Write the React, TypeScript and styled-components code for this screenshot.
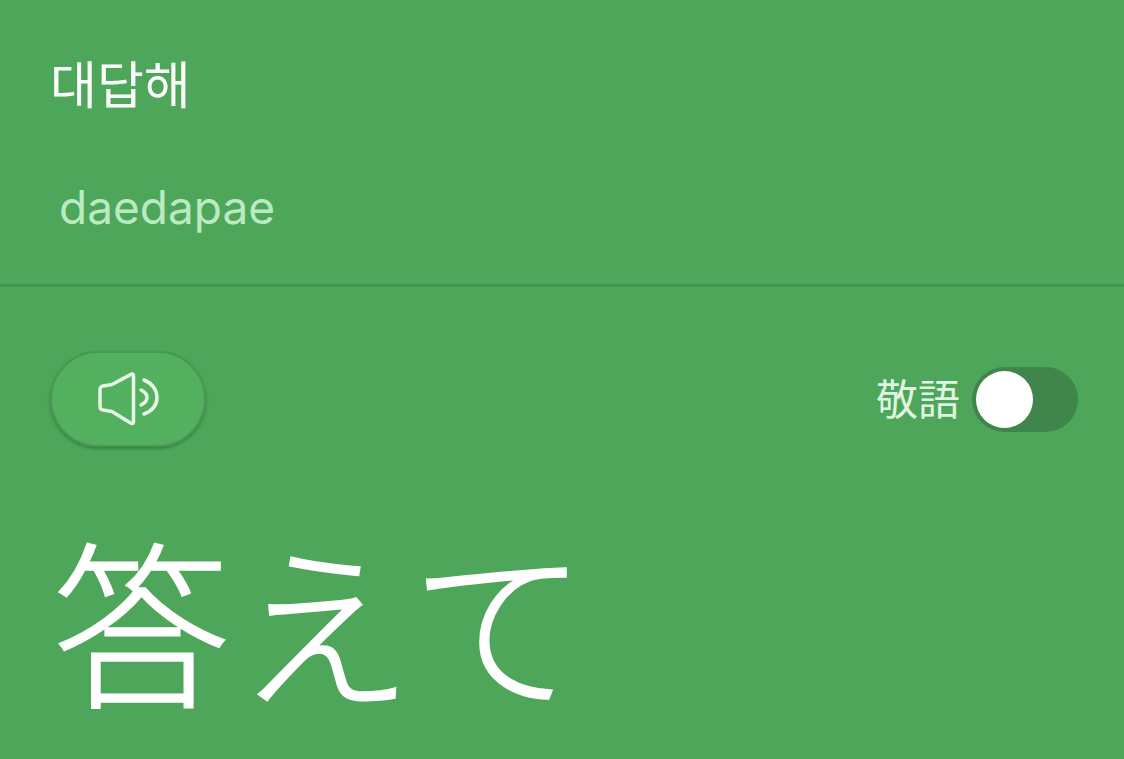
import React from "react";
import styled, { createGlobalStyle } from "styled-components";

const GlobalStyle = createGlobalStyle`
  html, body {
    margin: 0;
    padding: 0;
    width: 100%;
    height: 100%;
    overflow: hidden;
    background: #4ea65a;
  }
`;

const Screen = styled.div`
  width: 1124px;
  height: 759px;
  overflow: hidden;
  background: #4ea65a;
  color: #fff;
  font-family: "Inter", "Noto Sans CJK KR", sans-serif;
`;

const SourcePanel = styled.section`
  height: 235px;
  padding: 49px 0 0 50px;
  border-bottom: 3px solid #459350;
`;

const SourceText = styled.div`
  font-family: "Noto Sans CJK KR", sans-serif;
  font-size: 51px;
  line-height: 66px;
  height: 66px;
  color: #fbfffb;
`;

const Romanized = styled.div`
  margin: 62px 0 0 9px;
  font-size: 46px;
  font-weight: 400;
  line-height: 60px;
  color: #b9eac0;
`;

const ResultPanel = styled.section`
  padding: 64px 46px 0 50px;
`;

const Controls = styled.div`
  display: flex;
  align-items: center;
  justify-content: space-between;
`;

const SpeakButton = styled.button`
  width: 156px;
  height: 96px;
  padding: 0;
  display: flex;
  align-items: center;
  justify-content: center;
  border: 2px solid #459a51;
  border-radius: 48px;
  background: #52b05e;
  box-shadow: 0 2px 3px rgba(40, 90, 48, 0.5);
  color: #e6f7e8;
`;

const HonorificGroup = styled.div`
  display: flex;
  align-items: center;
  gap: 12px;
`;

const HonorificLabel = styled.span`
  padding-bottom: 4px;
  font-family: "Noto Sans CJK JP", sans-serif;
  font-size: 42px;
  line-height: 60px;
  color: #dff5e2;
`;

const SwitchTrack = styled.div`
  width: 106px;
  height: 65px;
  box-sizing: border-box;
  padding: 4px;
  border-radius: 33px;
  background: #40854b;
`;

const SwitchThumb = styled.div`
  width: 57px;
  height: 57px;
  border-radius: 50%;
  background: #fff;
`;

const Translation = styled.div`
  margin: 66px 0 0 3px;
  font-family: "Noto Sans CJK JP", sans-serif;
  font-weight: 300;
  font-size: 177px;
  letter-spacing: 6px;
  line-height: 210px;
  color: #fff;
  -webkit-text-stroke: 1.5px #fff;
  white-space: nowrap;
`;

function SpeakerIcon() {
  return (
    <svg width="62" height="54" viewBox="0 0 62 54" fill="none" stroke="currentColor" strokeWidth="3.5" strokeLinecap="round" strokeLinejoin="round">
      <path d="M6 14 C4 14.4 3 15.5 3 17.5 V34.5 C3 36.5 4 37.6 6 38 L15 39.5 L33.5 51 C35.5 52 36.5 51.5 36.5 49.5 V4 C36.5 2 35.5 1.6 33.5 2.6 L15 12.5 Z" />
      <path d="M44 18 C48 20 50 23 50 25.5 C50 28 48 31 44 33" />
      <path d="M47 8 C55 11 60 18 60 25.5 C60 33 55 39 47 42" />
    </svg>
  );
}

export default function App() {
  return (
    <Screen>
      <GlobalStyle />
      <SourcePanel>
        <SourceText>대답해</SourceText>
        <Romanized>daedapae</Romanized>
      </SourcePanel>
      <ResultPanel>
        <Controls>
          <SpeakButton aria-label="speak">
            <SpeakerIcon />
          </SpeakButton>
          <HonorificGroup>
            <HonorificLabel>敬語</HonorificLabel>
            <SwitchTrack>
              <SwitchThumb />
            </SwitchTrack>
          </HonorificGroup>
        </Controls>
        <Translation>答えて</Translation>
      </ResultPanel>
    </Screen>
  );
}
